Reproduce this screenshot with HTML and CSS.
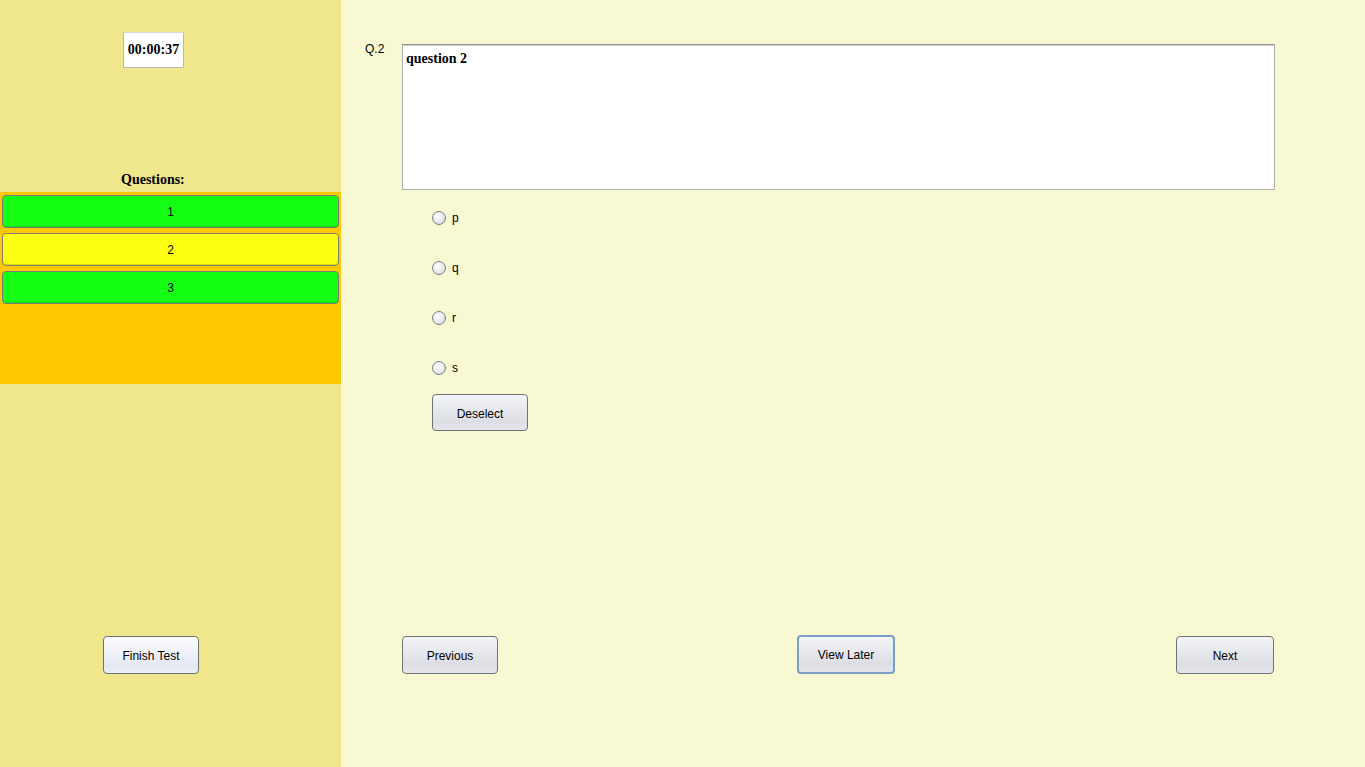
FILE: index.html
```html
<!DOCTYPE html>
<html>
<head>
<meta charset="utf-8">
<link rel="stylesheet" href="styles.css">
</head>
<body>
<div class="app">
  <aside class="side">
    <div class="timer">00:00:37</div>
    <div class="q-label">Questions:</div>
    <div class="q-list">
      <div class="q-btn done">1</div>
      <div class="q-btn current">2</div>
      <div class="q-btn done">3</div>
    </div>
    <button class="btn finish">Finish Test</button>
  </aside>
  <main class="main">
    <div class="q-row">
      <div class="q-num">Q.2</div>
      <div class="q-text">question 2</div>
    </div>
    <div class="options">
      <label class="opt"><span class="radio"></span><span>p</span></label>
      <label class="opt"><span class="radio"></span><span>q</span></label>
      <label class="opt"><span class="radio"></span><span>r</span></label>
      <label class="opt"><span class="radio"></span><span>s</span></label>
      <button class="btn deselect">Deselect</button>
    </div>
    <div class="nav">
      <button class="btn prev">Previous</button>
      <button class="btn later">View Later</button>
      <button class="btn next">Next</button>
    </div>
  </main>
</div>
</body>
</html>
```
FILE: styles.css
```css
html, body {
  margin: 0;
  padding: 0;
  height: 100%;
}
body {
  font-family: "Liberation Sans", Arial, sans-serif;
  font-size: 12px;
  color: #000;
}
.app {
  display: flex;
  height: 767px;
}
.side {
  width: 341px;
  flex: none;
  background: #f0e68c;
  display: flex;
  flex-direction: column;
}
.timer {
  margin: 32px 0 0 123px;
  width: 59px;
  height: 34px;
  box-sizing: content-box;
  background: #fff;
  border: 1px solid #b8b8b8;
  border-top-color: #d8d8d8;
  font-family: "Liberation Serif", "Times New Roman", serif;
  font-weight: bold;
  font-size: 14px;
  display: flex;
  align-items: center;
  justify-content: center;
}
.q-label {
  margin: 103px 0 3px 0;
  padding-left: 121px;
  line-height: 18px;
  height: 18px;
  font-family: "Liberation Serif", "Times New Roman", serif;
  font-weight: bold;
  font-size: 14px;
}
.q-list {
  background: #ffc800;
  height: 192px;
  box-sizing: border-box;
  padding: 3px 2px;
  display: flex;
  flex-direction: column;
  gap: 5px;
}
.q-btn {
  height: 33px;
  box-sizing: border-box;
  border: 1px solid #7a7a7a;
  border-radius: 4px;
  display: flex;
  align-items: center;
  justify-content: center;
  font-size: 12px;
  box-shadow: inset 0 -1px 0 rgba(0,0,0,0.15);
}
.q-btn.done { background: #14ff14; }
.q-btn.current { background: #ffff14; }
.btn {
  font-family: "Liberation Sans", Arial, sans-serif;
  font-size: 12px;
  color: #000;
  border: 1px solid #6f7378;
  border-radius: 4px;
  background: linear-gradient(#f3f4f7 0%, #e8e9ee 40%, #dcdee4 75%, #e4e6ec 100%);
  padding: 2px 0 0 0;
  cursor: default;
}
.finish {
  margin: 252px 0 0 103px;
  width: 96px;
  height: 38px;
  background: linear-gradient(#fbfcfe 0%, #eef1f8 50%, #e3e7f1 80%, #eef0f6 100%);
}
.main {
  flex: 1;
  background: #f8f8d2;
  padding: 44px 0 0 24px;
  display: flex;
  flex-direction: column;
}
.q-row {
  display: flex;
  align-items: flex-start;
}
.q-num {
  width: 37px;
  line-height: 10px;
}
.q-text {
  box-sizing: content-box;
  width: 868px;
  height: 138px;
  padding: 6px 0 0 3px;
  background: #fff;
  border: 1px solid #b0b0b0;
  border-top: 1px solid #909090;
  box-shadow: inset 0 1px 0 #d0d0d0;
  font-family: "Liberation Serif", "Times New Roman", serif;
  font-weight: bold;
  font-size: 14px;
}
.options {
  margin: 3px 0 0 67px;
  display: flex;
  flex-direction: column;
}
.opt {
  height: 50px;
  display: flex;
  align-items: center;
  gap: 6px;
}
.radio {
  width: 12px;
  height: 12px;
  border: 1px solid #7d8088;
  border-radius: 50%;
  background: radial-gradient(circle at 40% 35%, #ffffff 0%, #eceef2 45%, #c9ccd4 100%);
  display: inline-block;
}
.deselect {
  margin-top: 1px;
  width: 96px;
  height: 37px;
}
.nav {
  margin: 205px 0 0 37px;
  display: flex;
  align-items: flex-start;
  width: 872px;
}
.prev {
  width: 96px;
  height: 38px;
}
.later {
  margin: -1px 0 0 299px;
  width: 98px;
  height: 39px;
  padding-top: 0;
  border: 2px solid #7aa0c8;
}
.next {
  margin-left: auto;
  width: 98px;
  height: 38px;
}
```
